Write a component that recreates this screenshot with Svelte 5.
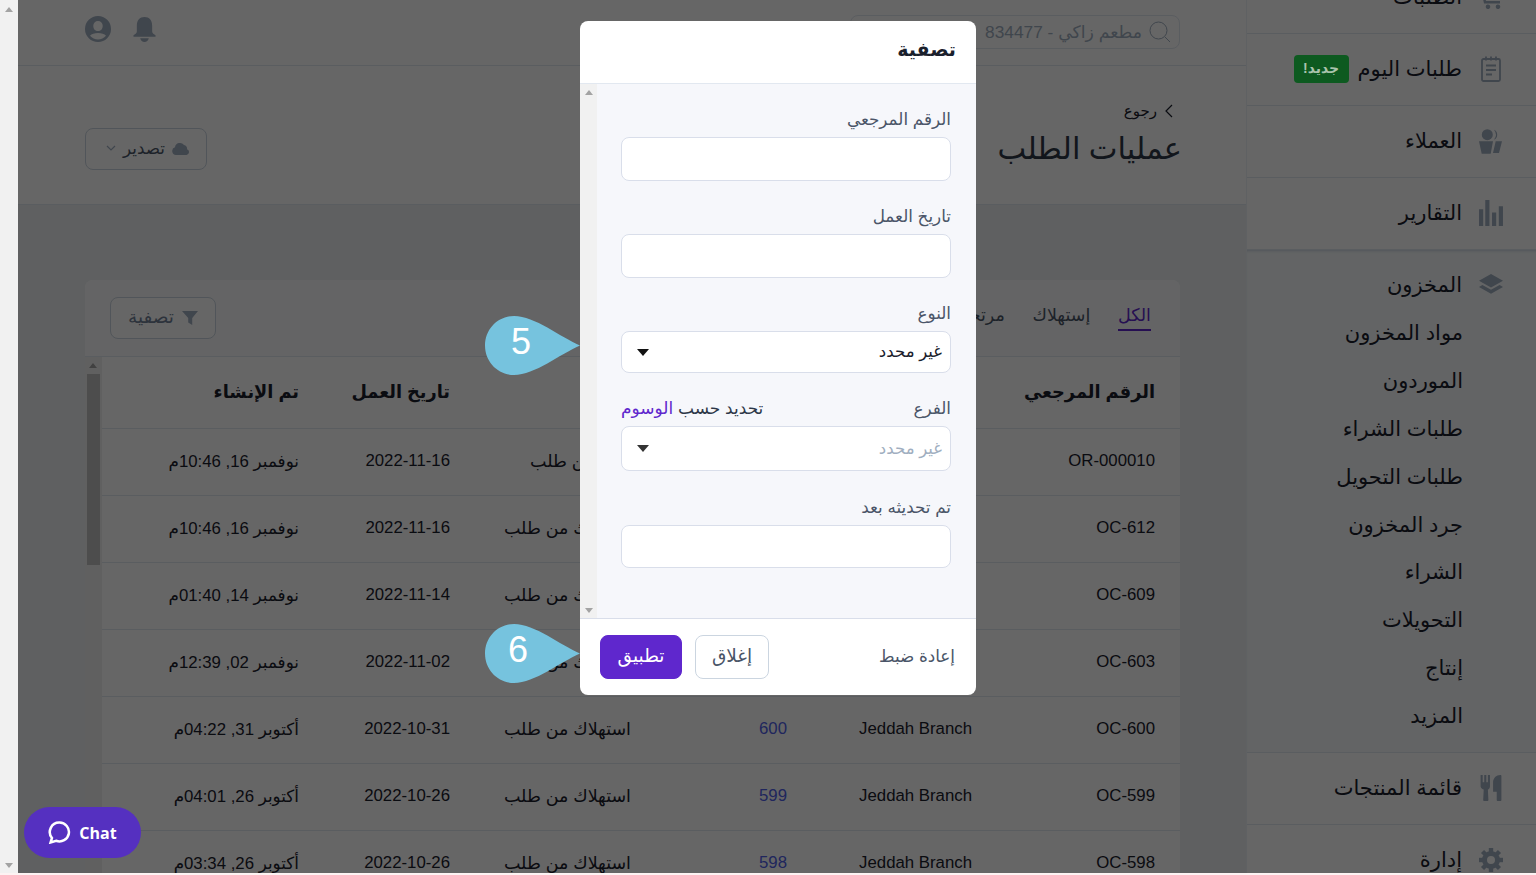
<script>
  const rows = [
    { ref: "OR-000010", branch: "Jeddah Branch", no: "610", type: "إنتاج من طلب", date: "2022-11-16", made: "نوفمبر 16, 10:46م" },
    { ref: "OC-612", branch: "Jeddah Branch", no: "612", type: "استهلاك من طلب", date: "2022-11-16", made: "نوفمبر 16, 10:46م" },
    { ref: "OC-609", branch: "Jeddah Branch", no: "609", type: "استهلاك من طلب", date: "2022-11-14", made: "نوفمبر 14, 01:40م" },
    { ref: "OC-603", branch: "Jeddah Branch", no: "603", type: "استهلاك من طلب", date: "2022-11-02", made: "نوفمبر 02, 12:39م" },
    { ref: "OC-600", branch: "Jeddah Branch", no: "600", type: "استهلاك من طلب", date: "2022-10-31", made: "أكتوبر 31, 04:22م" },
    { ref: "OC-599", branch: "Jeddah Branch", no: "599", type: "استهلاك من طلب", date: "2022-10-26", made: "أكتوبر 26, 04:01م" },
    { ref: "OC-598", branch: "Jeddah Branch", no: "598", type: "استهلاك من طلب", date: "2022-10-26", made: "أكتوبر 26, 03:34م" },
  ];
  const stockLinks = ["مواد المخزون", "الموردون", "طلبات الشراء", "طلبات التحويل", "جرد المخزون", "الشراء", "التحويلات", "إنتاج", "المزيد"];
  const gearTeeth = [0, 45, 90, 135, 180, 225, 270, 315];
</script>

{#snippet caret()}
  <svg class="caret" viewBox="0 0 12 7" aria-hidden="true"><path d="M0 0h12L6 7z" /></svg>
{/snippet}

{#snippet pin(n, top, nx)}
  <svg class="pin" style={`top:${top}px`} viewBox="0 0 95 59" aria-hidden="true">
    <path d="M95 29.5C75 21 50 0 29 0 13 0 0 13 0 29.5S13 59 29 59C50 59 75 38 95 29.5Z" />
    <text x={nx} y="38">{n}</text>
  </svg>
{/snippet}

<div class="page">
  <aside class="side">
    <a class="item first">
      <svg class="ico" viewBox="0 0 24 24"><path d="M0 2h4l3 14h14v2.500H5L2 4.500H0zM6 4h17l-2 9H8zM8.500 19.500a2.300 2.300 0 1 1 0 4.500 2.300 2.300 0 0 1 0-4.500zm10 0a2.300 2.300 0 1 1 0 4.500 2.300 2.300 0 0 1 0-4.500z" /></svg>
      <span>الطلبات</span>
    </a>
    <a class="item">
      <svg class="ico line" viewBox="0 0 24 26"><rect x="3" y="3" width="18" height="22" rx="1.500" /><path d="M7 .5v4M12 .5v4M17 .5v4M7 9.500h10M7 14h10M7 18.500h6" /></svg>
      <span>طلبات اليوم</span>
      <b class="badge">جديد!</b>
    </a>
    <a class="item">
      <svg class="ico" viewBox="0 0 24 26"><circle cx="8.300" cy="6.700" r="5.500" /><path d="M15 1.700a5.500 5.500 0 0 1 0 10 8 8 0 0 0 0-10zM0 13.300h14L11.700 25.700H2.700zM16.700 13.300H23L20 25h-6z" /></svg>
      <span>العملاء</span>
    </a>
    <a class="item">
      <svg class="ico" viewBox="0 0 23 25"><path d="M0 9h4v16H0zM6 0h4v25H6zM12.500 12h4v13h-4zM19 6h4v19h-4z" /></svg>
      <span>التقارير</span>
    </a>
    <section class="stock">
      <a class="item plain">
        <svg class="ico" viewBox="0 0 25 23"><path d="M12.500 0L25 7l-12.500 7L0 7zM3.500 11.500l9 5 9-5 3.500 2-12.500 7-12.500-7z" /></svg>
        <span>المخزون</span>
      </a>
      <ul class="sub">
        {#each stockLinks as link}
          <li>{link}</li>
        {/each}
      </ul>
    </section>
    <a class="item">
      <svg class="ico" viewBox="0 0 20 25"><path d="M0 0h2v7h1.500V0h2v7H7V0h2v11c0 1.500-1 2.500-2 3l.5 10c0 .5-.5 1-1 1h-3c-.5 0-1-.5-1-1L3 14c-1-.5-3-1.500-3-3zM12 7c0-4 3-7 7-7 .8 0 1 .5 1 1v23c0 .5-.5 1-1 1h-2.500c-.5 0-1-.5-1-1v-8H12z" /></svg>
      <span>قائمة المنتجات</span>
    </a>
    <a class="item">
      <svg class="ico gear" viewBox="0 0 24 24">
        <circle cx="12" cy="12" r="6.500" />
        {#each gearTeeth as a}
          <rect x="9.800" y="0" width="4.400" height="5" transform={`rotate(${a} 12 12)`} />
        {/each}
      </svg>
      <span>إدارة</span>
    </a>
  </aside>

  <main class="main">
    <header class="top">
      <div class="search">
        <svg viewBox="0 0 22 22" class="glass"><circle cx="9.500" cy="9.500" r="8.500" /><path d="M16 16l5 5" /></svg>
        <span>مطعم زاكي - 834477</span>
      </div>
      <div class="top-icons">
        <svg class="bell" viewBox="0 0 24 26"><path d="M12 0c5 0 8 3.500 8 9v6c0 2 2 3 3.500 4v1.500H.5V19C2 18 4 17 4 15V9c0-5.500 3-9 8-9zM7.500 22h9c-.5 2.500-2.300 4-4.500 4s-4-1.500-4.500-4z" /></svg>
        <svg class="user" viewBox="0 0 26 26"><path fill-rule="evenodd" d="M13 0a13 13 0 1 1 0 26 13 13 0 0 1 0-26zm0 5a4.700 4.700 0 0 0-4.700 5c0 3 2 5 4.700 5s4.700-2 4.700-5A4.700 4.700 0 0 0 13 5zm0 12c-3.500 0-6.500 1-8 2.700a10.500 10.500 0 0 0 16 0C19.500 18 16.500 17 13 17z" /></svg>
      </div>
    </header>

    <div class="head">
      <div>
        <div class="back"><svg viewBox="0 0 8 14"><path d="M1 1l6 6-6 6" /></svg>رجوع</div>
        <h1>عمليات الطلب</h1>
      </div>
      <button class="btn export">
        <svg class="cloud" viewBox="0 0 18 13"><path d="M4 13a4 4 0 0 1-1-7.800A5 5 0 0 1 12 3a3.500 3.500 0 0 1 3 4.200A3 3 0 0 1 14.500 13z" /></svg>
        تصدير
        <svg class="chev" viewBox="0 0 10 6"><path d="M1 1l4 4 4-4" /></svg>
      </button>
    </div>

    <div class="content">
      <div class="card">
        <div class="card-head">
          <nav class="tabs">
            <a class="active">الكل</a>
            <a>إستهلاك</a>
            <a>مرتجع</a>
            <a>إنتاج</a>
          </nav>
          <button class="btn filter">
            <svg class="funnel" viewBox="0 0 18 16"><path d="M0 0h18l-6.500 8v8L7 13V8z" /></svg>
            تصفية
          </button>
        </div>
        <div class="table-wrap">
          <div class="table">
            <div class="tr th">
              <div>الرقم المرجعي</div>
              <div>الفرع</div>
              <div>رقم الطلب</div>
              <div>النوع</div>
              <div>تاريخ العمل</div>
              <div>تم الإنشاء</div>
            </div>
            {#each rows as r}
              <div class="tr">
                <div>{r.ref}</div>
                <div>{r.branch}</div>
                <div><a class="num">{r.no}</a></div>
                <div class="kind">{r.type}</div>
                <div>{r.date}</div>
                <div>{r.made}</div>
              </div>
            {/each}
          </div>
          <div class="tbar"><i class="up"></i><i class="thumb"></i></div>
        </div>
      </div>
    </div>
  </main>

  <div class="pagebar"><i class="up"></i><i class="down"></i></div>

  <div class="overlay"></div>

  <div class="modal">
    <div class="m-head">تصفية</div>
    <div class="m-mid">
      <div class="m-body">
        <div class="field">
          <label>الرقم المرجعي</label>
          <div class="inp"></div>
        </div>
        <div class="field">
          <label>تاريخ العمل</label>
          <div class="inp"></div>
        </div>
        <div class="field">
          <label>النوع</label>
          <div class="sel s42"><span>غير محدد</span>{@render caret()}</div>
        </div>
        <div class="field">
          <label class="split">الفرع <span>تحديد حسب <a>الوسوم</a></span></label>
          <div class="sel s45 muted"><span>غير محدد</span>{@render caret()}</div>
        </div>
        <div class="field">
          <label>تم تحديثه بعد</label>
          <div class="inp s43"></div>
        </div>
      </div>
      <div class="mbar"><i class="up"></i><i class="down"></i></div>
    </div>
    <div class="m-foot">
      <a class="reset">إعادة ضبط</a>
      <div class="m-actions">
        <button class="btn close">إغلاق</button>
        <button class="btn apply">تطبيق</button>
      </div>
    </div>
  </div>

  {@render pin("5", 316, 26)}
  {@render pin("6", 624, 23)}

  <div class="chat">
    <svg viewBox="0 0 22 22"><path d="M11 1.500a9 9 0 1 1-3.200 17.400L2.500 20.500l1.300-4.300A9 9 0 0 1 11 1.500z" /></svg>
    Chat
  </div>
</div>

<style>
  :global(body) {
    background: #fdf3f3;
    font-family: "Liberation Sans", "DejaVu Sans", sans-serif;
    color: #1a202c;
  }
  .page {
    position: relative;
    display: flex;
    direction: rtl;
    height: 873px;
    overflow: hidden;
    font-size: 16.800px;
  }
  a { color: inherit; text-decoration: none; }
  i { display: block; }

  /* sidebar */
  .side {
    width: 289px;
    flex: none;
    margin-top: -38px;
    background: #fff;
    border-left: 1px solid #edf2f7;
  }
  .item {
    display: flex;
    align-items: center;
    height: 72px;
    box-sizing: border-box;
    padding: 0 30px 2px 0;
    border-bottom: 1px solid #e2e8f0;
    font-size: 21px;
  }
  .item.plain { border-bottom: 0; }
  .ico {
    width: 24px;
    height: 26px;
    margin: 0 3px 0 17px;
    flex: none;
    fill: #a0aec0;
  }
  .ico.line { fill: none; stroke: #a0aec0; stroke-width: 1.800; }
  .gear circle { fill: none; stroke: #a0aec0; stroke-width: 5; }
  .badge {
    position: relative;
    z-index: 3;
    margin-right: 9px;
    width: 55px;
    height: 28px;
    border-radius: 4px;
    background: #0d5a20;
    color: #a9c3ac;
    font-size: 14px;
    line-height: 27px;
    text-align: center;
  }
  .stock {
    background: #f7fafc;
    border-bottom: 1px solid #e2e8f0;
    box-shadow: inset 0 3px 3px -2px #cbd5e0;
    padding-bottom: 12px;
  }
  .sub {
    list-style: none;
    margin: -13px 0 0;
    padding: 0 73px 0 0;
    font-size: 21px;
  }
  .sub li { height: 47.900px; line-height: 47.900px; }

  /* main */
  .main {
    flex: 1;
    min-width: 0;
    display: flex;
    flex-direction: column;
    background: #eef0f3;
  }
  .top {
    height: 66px;
    flex: none;
    box-sizing: border-box;
    background: #fff;
    border-bottom: 1px solid #e2e8f0;
    display: flex;
    align-items: flex-start;
    justify-content: space-between;
    padding: 15px 66px 0 67px;
  }
  .search {
    width: 330px;
    height: 34px;
    box-sizing: border-box;
    border: 1px solid #e2e8f0;
    border-radius: 8px;
    display: flex;
    align-items: center;
    gap: 7px;
    padding-right: 8px;
    color: #a0aec0;
    font-size: 17.300px;
  }
  .glass { width: 22px; height: 22px; fill: none; stroke: #a0aec0; stroke-width: 1; }
  .top-icons { display: flex; align-items: center; gap: 22px; padding-top: 1px; }
  .bell { width: 23px; height: 25px; fill: #a0aec0; margin-top: 1px; }
  .user { width: 26px; height: 26px; fill: #a0aec0; }
  .head {
    height: 139px;
    flex: none;
    box-sizing: border-box;
    background: #fff;
    border-bottom: 1px solid #e2e8f0;
    display: flex;
    justify-content: space-between;
    padding: 33px 66px 0 67px;
  }
  .back { display: flex; align-items: center; gap: 8px; height: 24px; padding-right: 7px; font-size: 15px; }
  .back svg { width: 8px; height: 14px; fill: none; stroke: #1a202c; stroke-width: 1.200; transform: scaleX(-1); }
  h1 { margin: 1px -2px 0 0; font-size: 30.500px; font-weight: 400; line-height: 48px; color: #2d3748; }
  .btn {
    font: inherit;
    border-radius: 8px;
    background: #fff;
    border: 1px solid #cbd5e0;
    box-sizing: border-box;
    display: flex;
    align-items: center;
    justify-content: center;
    color: #4a5568;
    padding: 0;
  }
  .export { width: 122px; height: 42px; margin-top: 28px; gap: 7px; padding: 0 0 2px 4px; position: relative; top: 1px; }
  .cloud { width: 18px; height: 13px; fill: #a0aec0; }
  .chev { width: 10px; height: 6px; fill: none; stroke: #a0aec0; stroke-width: 1.200; }

  .content { flex: 1; min-height: 0; padding: 75px 66px 0 67px; }
  .card { background: #fff; border-radius: 8px 8px 0 0; height: 100%; overflow: hidden; }
  .card-head {
    height: 77px;
    box-sizing: border-box;
    border-bottom: 1px solid #e2e8f0;
    display: flex;
    justify-content: space-between;
    padding: 17px 25px 0 25px;
    background: #fafbfc;
  }
  .tabs { display: flex; gap: 25px; padding-right: 4px; height: 34px; align-items: flex-start; font-size: 17.500px; }
  .tabs a { line-height: 37px; height: 33px; color: #4a5568; }
  .tabs a:nth-child(2) { min-width: 63px; text-align: center; }
  .tabs a.active { color: #5f27cd; border-bottom: 2px solid #5f27cd; height: 32px; }
  .filter { width: 106px; height: 42px; gap: 8px; padding-bottom: 2px; color: #718096; font-size: 18.500px; }
  .funnel { width: 16px; height: 16px; fill: #a0aec0; margin-top: 2px; }
  .table-wrap { display: flex; }
  .table { flex: 1; min-width: 0; }
  .tr {
    display: grid;
    grid-template-columns: 183px 185px 156px 181px 151px 1fr;
    box-sizing: border-box;
    padding: 0 25px 2px 0;
    height: 67px;
    align-items: center;
    border-bottom: 1px solid #e2e8f0;
  }
  .tr.th { height: 72px; font-size: 17.800px; font-weight: 700; }
  .kind { font-size: 17.500px; }
  .num { color: #5060e8; }
  .tbar { width: 17px; flex: none; background: #f1f1f1; padding: 0 2px; box-sizing: border-box; position: relative; }
  .thumb { width: 13px; height: 191px; margin-top: 17px; background: #c1c1c1; }
  .tbar .up { position: absolute; top: 6px; left: 4px; }
  .up { width: 0; height: 0; border: 4px solid transparent; border-top: 0; border-bottom: 5px solid #a3a3a3; }
  .down { width: 0; height: 0; border: 4px solid transparent; border-bottom: 0; border-top: 5px solid #a3a3a3; }

  .pagebar {
    width: 18px;
    flex: none;
    background: #f1f1f1;
    display: flex;
    flex-direction: column;
    justify-content: space-between;
    align-items: center;
    padding: 7px 0 5px;
    box-sizing: border-box;
  }

  .overlay { position: absolute; inset: 0 0 0 18px; background: rgba(0, 0, 0, .6); z-index: 2; }

  /* filter modal */
  .modal {
    position: absolute;
    z-index: 4;
    left: 580px;
    top: 21px;
    width: 396px;
    height: 674px;
    background: #fff;
    border-radius: 8px;
    overflow: hidden;
    display: flex;
    flex-direction: column;
  }
  .m-head {
    height: 63px;
    flex: none;
    box-sizing: border-box;
    border-bottom: 1px solid #e2e8f0;
    padding: 15px 20px 0 0;
    font-size: 19px;
    font-weight: 700;
    line-height: 28px;
  }
  .m-mid {
    height: 535px;
    flex: none;
    box-sizing: border-box;
    display: flex;
    background: #f6f7fb;
    border-bottom: 1px solid #d9deea;
  }
  .m-body {
    flex: 1;
    min-width: 0;
    padding: 23px 25px 0 24px;
    display: flex;
    flex-direction: column;
    gap: 23px;
  }
  .field label { display: block; height: 24px; line-height: 26px; margin-bottom: 6px; color: #4a5568; font-size: 16.800px; }
  .field label.split { display: flex; justify-content: space-between; }
  .split span { color: #2d3748; font-size: 17px; }
  .split a { color: #5f27cd; }
  .inp, .sel {
    box-sizing: border-box;
    height: 44px;
    background: #fff;
    border: 1px solid #d9deea;
    border-radius: 8px;
  }
  .inp.s43 { height: 43px; }
  .sel {
    display: flex;
    align-items: center;
    justify-content: space-between;
    padding: 0 8px 0 15px;
    font-size: 16.600px;
    color: #1a202c;
  }
  .sel.s42 { height: 42px; }
  .sel.s45 { height: 45px; margin-bottom: 1px; }
  .sel.muted { color: #a0aec0; }
  .sel.muted .caret { fill: #333; }
  .caret { width: 12px; height: 7px; fill: #111; }
  .mbar {
    width: 17px;
    flex: none;
    background: #f1f1f1;
    display: flex;
    flex-direction: column;
    justify-content: space-between;
    align-items: center;
    padding: 6px 0 5px;
    box-sizing: border-box;
  }
  .m-foot {
    flex: 1;
    display: flex;
    align-items: center;
    justify-content: space-between;
    padding: 0 21px 0 20px;
  }
  .reset { color: #4a5568; font-size: 16.800px; padding-bottom: 2px; }
  .m-actions { display: flex; gap: 13px; }
  .m-actions .btn { height: 44px; font-size: 18.500px; padding-bottom: 2px; }
  .close { width: 74px; }
  .apply { width: 82px; background: #5f27cd; border-color: #5f27cd; color: #fff; }

  .pin { position: absolute; z-index: 5; left: 485px; width: 95px; height: 59px; fill: #76c3de; direction: ltr; }
  .pin text { fill: #fff; font: 36px "Liberation Sans", sans-serif; }

  .chat {
    position: absolute;
    z-index: 5;
    left: 24px;
    top: 807px;
    width: 117px;
    height: 51px;
    border-radius: 26px;
    background: #5530c0;
    color: #fff;
    direction: ltr;
    display: flex;
    align-items: center;
    justify-content: center;
    gap: 8px;
    font: 700 16px "Open Sans", sans-serif;
  }
  .chat svg { width: 23px; height: 23px; fill: none; stroke: #fff; stroke-width: 2.400; }
</style>
